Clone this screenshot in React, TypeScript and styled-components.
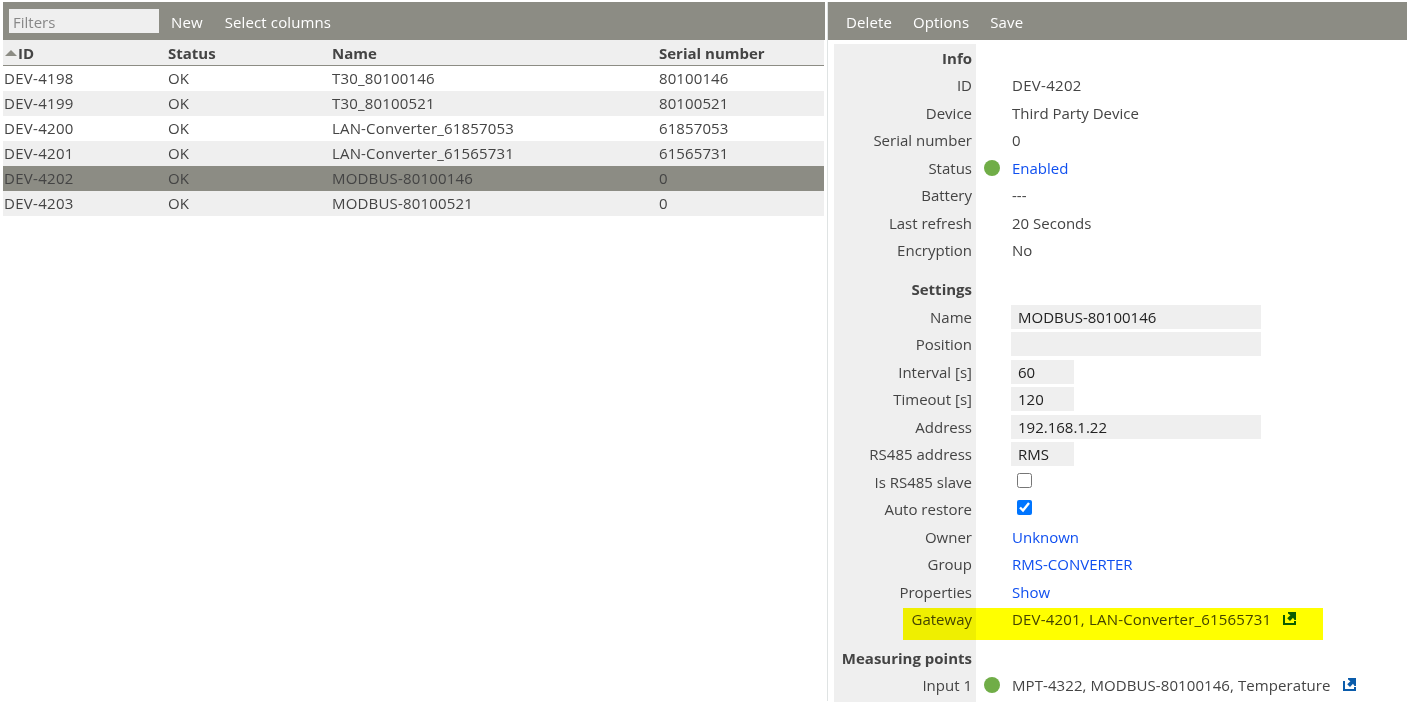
import React from "react";
import styled, { createGlobalStyle } from "styled-components";

const Global = createGlobalStyle`
  html, body { margin: 0; padding: 0; background: #fff; }
  body { font-family: "Open Sans", "Noto Sans", "Liberation Sans", sans-serif; font-size: 15px; color: #444; overflow: hidden; }
`;
const Page = styled.div`
  display: flex; height: 711px; width: 1415px; padding: 2px 8px 10px 3px; box-sizing: border-box; position: relative; overflow: hidden;
`;
const LeftPane = styled.div`width: 822px; flex: none; display: flex; flex-direction: column;`;
const Divider = styled.div`width: 1px; margin: 0 0 0 2px; background: #dfe3e3; flex: none;`;
const RightPane = styled.div`flex: 1; display: flex; flex-direction: column; min-width: 0;`;
const Toolbar = styled.div<{ $pad?: number; $gap?: number }>`
  height: 38px; flex: none; background: #8c8c84; display: flex; align-items: center; gap: ${p => p.$gap ?? 22}px; padding-left: ${p => p.$pad ?? 6}px; box-sizing: border-box;
`;
const FilterInput = styled.input`
  width: 150px; height: 24px; margin-right: -10px; border: 0; background: #efefef; padding: 2px 4px 0; box-sizing: border-box; font: inherit; color: #444; outline: none;
  &::placeholder { color: #888; opacity: 1; }
`;
const ToolButton = styled.span`color: #fff; font-size: 15px; letter-spacing: 0.12px; position: relative; top: 1px;`;
const Grid = styled.div`display: grid; grid-template-columns: 164px 164px 327px 1fr; margin-right: 1px;`;
const HeaderRow = styled(Grid)`height: 26px; align-items: center; background: #efefef; border-bottom: 1px solid #8c8c84; box-sizing: border-box; font-weight: 700; color: #444; padding: 0 0 0 1px;`;
const SortHead = styled.span`display: flex; align-items: center;`;
const Row = styled(Grid)<{ $alt: boolean; $sel: boolean }>`
  height: 25px; align-items: center; padding: 0 0 2px 1px; box-sizing: border-box;
  background: ${p => (p.$sel ? "#8c8c84" : p.$alt ? "#efefef" : "#fff")};
  & > span:nth-child(1) { letter-spacing: 0.3px; }
  & > span:nth-child(3) { letter-spacing: 0.17px; }
  & > span:nth-child(4) { letter-spacing: 0.1px; }
`;
const Detail = styled.div`margin: 4px 0 0 6px; display: grid; grid-template-columns: 142px 36px 1fr; flex: 1; position: relative; align-content: start;`;
const Label = styled.div<{ $bold?: boolean }>`
  background: #efefef; display: flex; align-items: center; justify-content: flex-end; padding-right: 4px; height: 27.5px; line-height: 28.5px; white-space: nowrap; box-sizing: border-box;
  font-weight: ${p => (p.$bold ? 700 : 400)};
`;
const Spacer = styled.div<{ $h: number }>`background: #efefef; height: ${p => p.$h}px; grid-column: 1;`;
const SpacerRest = styled.div<{ $h: number }>`height: ${p => p.$h}px; grid-column: 2 / 4;`;
const Fill = styled.div`background: #efefef; grid-column: 1; height: 3px;`;
const Dot = styled.div`display: flex; align-items: center; justify-content: center; height: 27.5px; padding-right: 5px; box-sizing: border-box;
  &::after { content: ""; width: 16px; height: 16px; border-radius: 50%; background: #70ad47; }
`;
const Empty = styled.div`height: 27.5px;`;
const Value = styled.div<{ $track?: number }>`height: 27.5px; line-height: 28.5px; display: flex; align-items: center; white-space: nowrap; letter-spacing: ${p => p.$track ?? 0}px;`;
const LinkText = styled.a`color: #0f4ff0; text-decoration: none;`;
const Field = styled.input<{ $w: number }>`
  width: ${p => p.$w}px; height: 24px; border: 0; background: #efefef; padding: 0 7px; box-sizing: border-box; font: inherit; color: #222; outline: none; margin-left: -1px;
`;
const Check = styled.input`width: 15px; height: 15px; margin: -3px 0 0 5px; accent-color: #0075ff;`;
const Ext = styled.svg`width: 13px; height: 13px; margin-left: 12px; color: #0b5cab; margin-top: -2px; flex: none;`;
const Highlight = styled.div`position: absolute; left: 903px; top: 608px; width: 420px; height: 32px; background: #ff0; mix-blend-mode: multiply; pointer-events: none;`;

const ExternalIcon = () => (
  <Ext viewBox="0 0 13 13" aria-hidden="true">
    <path d="M1 3V12H12V9" fill="none" stroke="currentColor" strokeWidth="2" />
    <path d="M5 0H13V8H11.5L10 5.8L7 9L4.2 6.3L7.4 3.2L5 1.6Z" fill="currentColor" />
  </Ext>
);

const rows = [
  ["DEV-4198", "OK", "T30_80100146", "80100146"],
  ["DEV-4199", "OK", "T30_80100521", "80100521"],
  ["DEV-4200", "OK", "LAN-Converter_61857053", "61857053"],
  ["DEV-4201", "OK", "LAN-Converter_61565731", "61565731"],
  ["DEV-4202", "OK", "MODBUS-80100146", "0"],
  ["DEV-4203", "OK", "MODBUS-80100521", "0"],
];

const Item = ({ label, dot, track, children }: { label: string; dot?: boolean; track?: number; children?: React.ReactNode }) => (
  <>
    <Label>{label}</Label>
    {dot ? <Dot /> : <Empty />}
    <Value $track={track}>{children}</Value>
  </>
);
const Section = ({ label }: { label: string }) => (
  <>
    <Label $bold>{label}</Label>
    <Empty />
    <Empty />
  </>
);
const Gap = ({ h }: { h: number }) => (<><Spacer $h={h} /><SpacerRest $h={h} /></>);

export default function App() {
  return (
    <Page>
      <Global />
      <LeftPane>
        <Toolbar>
          <FilterInput placeholder="Filters" />
          <ToolButton>New</ToolButton>
          <ToolButton>Select columns</ToolButton>
        </Toolbar>
        <HeaderRow>
          <SortHead>
            <svg width="14" height="8" viewBox="0 0 14 8" aria-hidden="true"><path d="M1 7L7 1L13 7Z" fill="#8c8c84" /></svg>
            ID
          </SortHead>
          <span>Status</span><span>Name</span><span>Serial number</span>
        </HeaderRow>
        {rows.map((r, i) => (
          <Row key={r[0]} $alt={i % 2 === 1} $sel={i === 4}>
            {r.map((c, j) => <span key={j}>{c}</span>)}
          </Row>
        ))}
      </LeftPane>
      <Divider />
      <RightPane>
        <Toolbar $pad={18} $gap={21}>
          <ToolButton>Delete</ToolButton>
          <ToolButton>Options</ToolButton>
          <ToolButton>Save</ToolButton>
        </Toolbar>
        <Detail>
          <Section label="Info" />
          <Item label="ID" track={0.3}>DEV-4202</Item>
          <Item label="Device">Third Party Device</Item>
          <Item label="Serial number">0</Item>
          <Item label="Status" dot><LinkText>Enabled</LinkText></Item>
          <Item label="Battery">---</Item>
          <Item label="Last refresh">20 Seconds</Item>
          <Item label="Encryption">No</Item>
          <Gap h={11.5} />
          <Section label="Settings" />
          <Item label="Name" track={0.25}><Field $w={250} defaultValue="MODBUS-80100146" /></Item>
          <Item label="Position"><Field $w={250} defaultValue="" /></Item>
          <Item label="Interval [s]"><Field $w={63} defaultValue="60" /></Item>
          <Item label="Timeout [s]"><Field $w={63} defaultValue="120" /></Item>
          <Item label="Address"><Field $w={250} defaultValue="192.168.1.22" /></Item>
          <Item label="RS485 address"><Field $w={63} defaultValue="RMS" /></Item>
          <Item label="Is RS485 slave"><Check type="checkbox" /></Item>
          <Item label="Auto restore"><Check type="checkbox" defaultChecked /></Item>
          <Item label="Owner"><LinkText>Unknown</LinkText></Item>
          <Item label="Group"><LinkText>RMS-CONVERTER</LinkText></Item>
          <Item label="Properties"><LinkText>Show</LinkText></Item>
          <Item label="Gateway" track={0.19}>DEV-4201, LAN-Converter_61565731<ExternalIcon /></Item>
          <Gap h={11} />
          <Section label="Measuring points" />
          <Item label="Input 1" dot track={0.08}>MPT-4322, MODBUS-80100146, Temperature<ExternalIcon /></Item>
          <Fill />
        </Detail>
      </RightPane>
      <Highlight />
    </Page>
  );
}
